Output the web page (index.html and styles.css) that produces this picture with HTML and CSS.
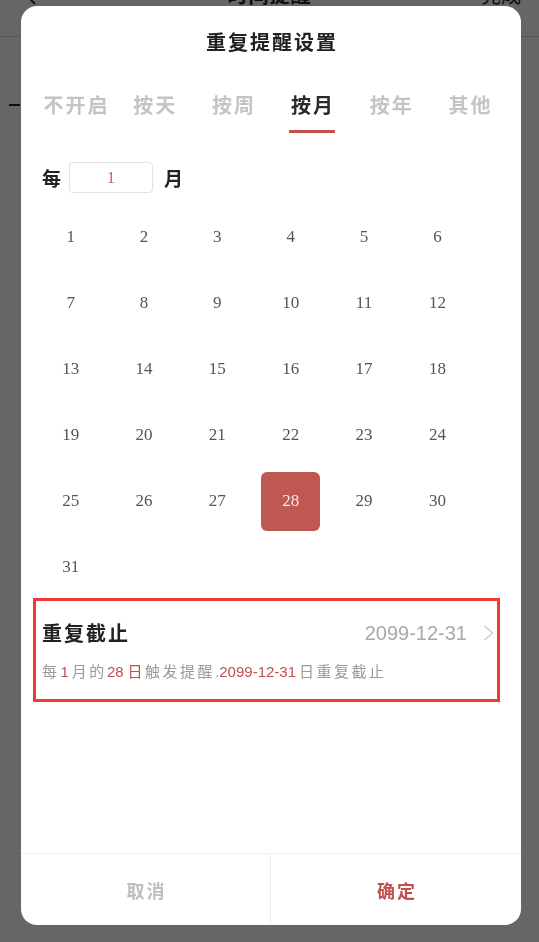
FILE: index.html
```html
<!DOCTYPE html>
<html lang="zh-CN">
<head>
<meta charset="utf-8">
<title>重复提醒设置</title>
<link rel="stylesheet" href="styles.css">
</head>
<body>
<div class="page">
  <div class="nav">
    <span class="nav-back"><svg width="12" height="20" viewBox="0 0 12 20"><path d="M11 1 L2 10 L11 19" fill="none" stroke="#333" stroke-width="2"/></svg></span>
    <span class="nav-title">时间提醒</span>
    <span class="nav-done">完成</span>
  </div>
  <div class="page-row"><span class="dash"></span></div>
</div>
<div class="mask"></div>
<div class="dialog">
  <div class="dlg-title">重复提醒设置</div>
  <div class="tabs">
    <div class="tab"><span>不开启</span></div>
    <div class="tab"><span>按天</span></div>
    <div class="tab"><span>按周</span></div>
    <div class="tab active"><span>按月</span></div>
    <div class="tab"><span>按年</span></div>
    <div class="tab"><span>其他</span></div>
  </div>
  <div class="every">
    <span class="every-label">每</span>
    <div class="every-input">1</div>
    <span class="every-label">月</span>
  </div>
  <div class="days">
    <div class="day"><span>1</span></div>
    <div class="day"><span>2</span></div>
    <div class="day"><span>3</span></div>
    <div class="day"><span>4</span></div>
    <div class="day"><span>5</span></div>
    <div class="day"><span>6</span></div>
    <div class="day"><span>7</span></div>
    <div class="day"><span>8</span></div>
    <div class="day"><span>9</span></div>
    <div class="day"><span>10</span></div>
    <div class="day"><span>11</span></div>
    <div class="day"><span>12</span></div>
    <div class="day"><span>13</span></div>
    <div class="day"><span>14</span></div>
    <div class="day"><span>15</span></div>
    <div class="day"><span>16</span></div>
    <div class="day"><span>17</span></div>
    <div class="day"><span>18</span></div>
    <div class="day"><span>19</span></div>
    <div class="day"><span>20</span></div>
    <div class="day"><span>21</span></div>
    <div class="day"><span>22</span></div>
    <div class="day"><span>23</span></div>
    <div class="day"><span>24</span></div>
    <div class="day"><span>25</span></div>
    <div class="day"><span>26</span></div>
    <div class="day"><span>27</span></div>
    <div class="day selected"><span>28</span></div>
    <div class="day"><span>29</span></div>
    <div class="day"><span>30</span></div>
    <div class="day"><span>31</span></div>
  </div>
  <div class="until">
    <div class="until-row">
      <span class="until-label">重复截止</span>
      <span class="until-value">2099-12-31</span>
      <svg class="chev" width="11" height="16" viewBox="0 0 11 16"><path d="M1.5 1 L9.5 8 L1.5 15" fill="none" stroke="#cccccc" stroke-width="1.5"/></svg>
    </div>
    <div class="until-desc"><span>每</span><span class="num hl n1">1</span><span>月的</span><span class="num hl n28">28</span><span class="hl">日</span><span>触发提醒</span><span class="num">.</span><span class="num hl">2099-12-31</span><span class="tail">日重复截止</span></div>
  </div>
  <div class="spacer"></div>
  <div class="footer">
    <div class="btn cancel">取消</div>
    <div class="btn ok">确定</div>
  </div>
</div>
</body>
</html>
```

FILE: styles.css
```css
* { box-sizing: border-box; }
html, body { margin: 0; padding: 0; }
body {
  width: 539px;
  height: 942px;
  overflow: hidden;
  background: #ffffff;
  font-family: "Noto Sans CJK SC", "Noto Sans", sans-serif;
}
.page { width: 539px; }
.nav {
  height: 70px;
  margin-top: -33px;
  padding: 18px 18px 0 18px;
  display: flex;
  align-items: flex-start;
  border-bottom: 1px solid #dddddd;
  color: #222;
}
.nav-back { width: 60px; padding-left: 6px; height: 20px; }
.nav-back svg { display: block; }
.nav-title {
  flex: 1;
  text-align: center;
  font-size: 20px;
  line-height: 20px;
  letter-spacing: 1px;
  font-weight: 700;
}
.nav-done {
  width: 60px;
  text-align: right;
  font-size: 20px;
  line-height: 20px;
}
.page-row { padding: 67px 0 0 9px; }
.dash { display: block; width: 11px; height: 2px; background: #222; }

.mask {
  position: fixed;
  left: 0; top: 0; right: 0; bottom: 0;
  background: rgba(0, 0, 0, 0.6);
}
.dialog {
  position: fixed;
  left: 21px;
  top: 6px;
  width: 500px;
  height: 919px;
  background: #ffffff;
  border-radius: 16px;
  overflow: hidden;
  display: flex;
  flex-direction: column;
}
.dlg-title {
  padding-top: 24px;
  padding-left: 2px;
  height: 48px;
  text-align: center;
  font-size: 20px;
  line-height: 24px;
  font-weight: 700;
  letter-spacing: 2px;
  color: #222;
}
.tabs {
  margin-top: 39px;
  padding: 0 12px 0 15px;
  display: grid;
  grid-template-columns: repeat(6, 1fr);
  height: 40px;
}
.tab {
  text-align: center;
  font-size: 20px;
  line-height: 24px;
  letter-spacing: 2px;
  color: #c4c4c4;
  font-weight: 700;
}
.tab span {
  display: inline-block;
  padding: 0 0 13px 2px;
  border-bottom: 3px solid transparent;
}
.tab.active { color: #2a2a2a; }
.tab.active span { border-bottom-color: #c0504d; }

.every {
  margin-top: 29px;
  padding-left: 21px;
  display: flex;
  align-items: center;
  height: 31px;
}
.every-label {
  font-size: 19px;
  font-weight: 700;
  color: #222;
  line-height: 31px;
}
.every-input {
  width: 84px;
  height: 31px;
  margin: 0 11px 0 8px;
  border: 1px solid #e2e2e2;
  border-radius: 4px;
  display: flex;
  align-items: center;
  justify-content: center;
  font-family: "Liberation Serif", serif;
  font-size: 17px;
  color: #d06462;
}
.days {
  margin-top: 11px;
  padding-left: 13px;
  display: grid;
  grid-template-columns: repeat(6, 73.35px);
  grid-auto-rows: 66px;
}
.day {
  display: flex;
  align-items: center;
  justify-content: center;
  font-family: "Liberation Serif", serif;
  font-size: 17px;
  color: #555555;
}
.day.selected span {
  width: 59px;
  height: 59px;
  border-radius: 6px;
  background: #c05852;
  color: #fbe6e4;
  display: flex;
  align-items: center;
  justify-content: center;
}
.until {
  margin: 1px 24px 0 15px;
  height: 98px;
  padding: 20px 3px 0 6px;
  outline: 3px solid #f03a3a;
}
.until-row {
  display: flex;
  align-items: center;
  height: 24px;
}
.until-label {
  font-size: 20px;
  font-weight: 700;
  letter-spacing: 2px;
  color: #222;
  line-height: 24px;
}
.until-value {
  margin-left: auto;
  font-family: "Liberation Sans", sans-serif;
  font-size: 20px;
  color: #a9a9a9;
}
.chev { margin-left: 16px; display: block; }
.until-desc {
  margin-top: 16px;
  font-size: 15px;
  line-height: 20px;
  letter-spacing: 2.5px;
  color: #9a9a9a;
  white-space: nowrap;
}
.until-desc .num {
  font-family: "Liberation Sans", sans-serif;
  letter-spacing: 0;
}
.until-desc .hl { color: #c0504d; }
.until-desc .n1 { margin: 0 3px 0 1px; }
.until-desc .n28 { margin-right: 4px; }
.until-desc .tail { margin-left: 3px; }

.spacer { flex: 1; }
.footer {
  height: 72px;
  border-top: 1px solid #eeeeee;
  display: grid;
  grid-template-columns: 250px 250px;
}
.btn {
  display: flex;
  align-items: center;
  justify-content: center;
  font-size: 18px;
  font-weight: 700;
  letter-spacing: 2px;
  padding-left: 2px;
}
.btn.cancel { color: #bdbdbd; border-right: 1px solid #eeeeee; }
.btn.ok { color: #c0504d; }
```
